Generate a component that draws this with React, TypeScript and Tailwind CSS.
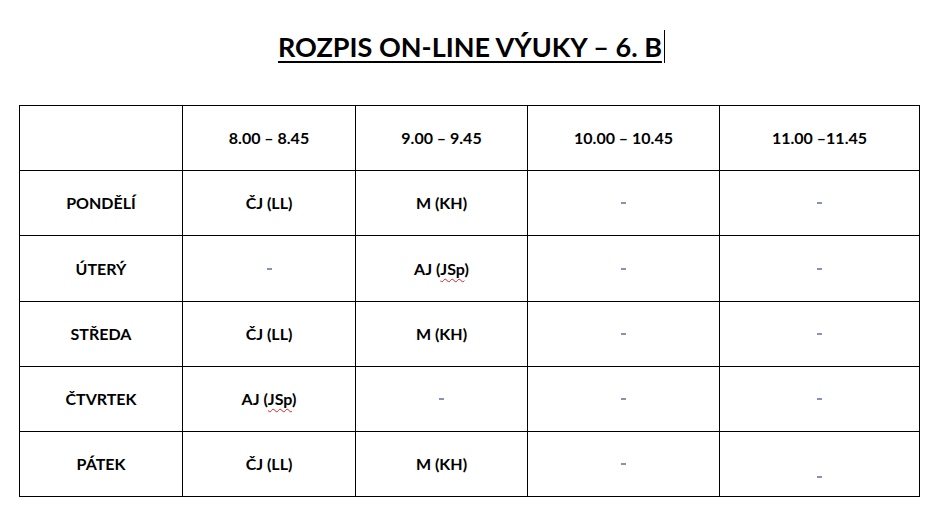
const times = ['8.00 – 8.45', '9.00 – 9.45', '10.00 – 10.45', '11.00 –11.45']

type Cell = string | null

// null = a small dash; 'low' dash sits lower in the cell
const rows: { day: string; h: string; cells: (Cell | 'low')[] }[] = [
  { day: 'PONDĚLÍ', h: 'h-[65px]', cells: ['ČJ (LL)', 'M (KH)', null, null] },
  { day: 'ÚTERÝ', h: 'h-[66px]', cells: [null, 'AJ (JSp)', null, null] },
  { day: 'STŘEDA', h: 'h-[65px]', cells: ['ČJ (LL)', 'M (KH)', null, null] },
  { day: 'ČTVRTEK', h: 'h-[65px]', cells: ['AJ (JSp)', null, null, null] },
  { day: 'PÁTEK', h: 'h-[65px]', cells: ['ČJ (LL)', 'M (KH)', null, 'low'] },
]

function Subject({ text }: { text: string }) {
  // spell-checker squiggle under "JSp"
  const m = text.match(/^(.*\()JSp(\).*)$/)
  if (!m) return <span>{text}</span>
  return (
    <span>
      {m[1]}
      <span className="underline decoration-wavy decoration-[#e02020] decoration-1 underline-offset-[3px]">JSp</span>
      {m[2]}
    </span>
  )
}

function Dash({ low }: { low?: boolean }) {
  return <span className={`block w-[5px] h-[2px] bg-[#8792b4] ${low ? 'mt-[26px]' : ''}`} />
}

export default function App() {
  return (
    <div className="w-[940px] h-[529px] bg-white text-black font-['Lato',sans-serif]">
      <div className="flex justify-center pt-[30px]">
        <h1 className="relative text-[27px] leading-[34px] font-bold underline decoration-2 underline-offset-[4px]">
          ROZPIS ON-LINE VÝUKY – 6. B
          <span className="absolute right-[-3px] top-[0px] w-px h-[33px] bg-black" />
        </h1>
      </div>

      <div className="ml-[19px] mt-[41px] w-[901px] grid grid-cols-[163px_173px_172px_192px_200px] border-l border-t border-black text-[16px] font-bold">
        <div className="h-[65px] border-r border-b border-black" />
        {times.map(t => (
          <div key={t} className="h-[65px] border-r border-b border-black flex items-center justify-center">
            {t}
          </div>
        ))}
        {rows.map(r => (
          <>
            <div key={r.day} className={`${r.h} border-r border-b border-black flex items-center justify-center`}>
              {r.day}
            </div>
            {r.cells.map((c, i) => (
              <div key={r.day + i} className={`${r.h} border-r border-b border-black flex items-center justify-center`}>
                {c === null ? <Dash /> : c === 'low' ? <Dash low /> : <Subject text={c} />}
              </div>
            ))}
          </>
        ))}
      </div>
    </div>
  )
}
